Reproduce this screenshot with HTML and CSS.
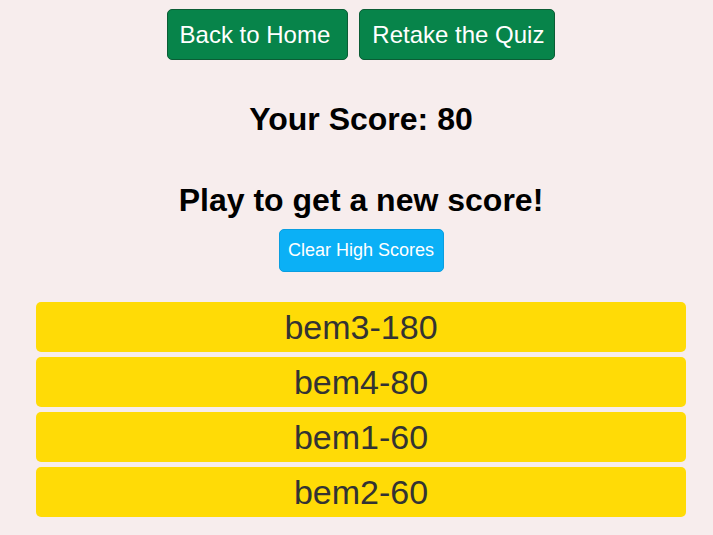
FILE: index.html
```html
<!DOCTYPE html>
<html>
<head>
<meta charset="utf-8">
<link rel="stylesheet" href="styles.css">
</head>
<body>
<div class="page">
  <div class="nav">
    <button class="btn-green btn-home">Back to Home</button>
    <button class="btn-green btn-retake">Retake the Quiz</button>
  </div>
  <h2 class="score">Your Score: 80</h2>
  <h2 class="play">Play to get a new score!</h2>
  <button class="btn-clear">Clear High Scores</button>
  <ul class="scores">
    <li>bem3-180</li>
    <li>bem4-80</li>
    <li>bem1-60</li>
    <li>bem2-60</li>
  </ul>
</div>
</body>
</html>
```

FILE: styles.css
```css
html, body {
  margin: 0;
  padding: 0;
  background: #f7eded;
  font-family: "Liberation Sans", Arial, sans-serif;
}
.page {
  width: 650px;
  margin-left: 36px;
  display: flex;
  flex-direction: column;
  align-items: center;
}
.nav {
  display: flex;
  gap: 11px;
  margin-top: 9px;
}
.btn-green {
  font-family: inherit;
  font-size: 24px;
  color: #fff;
  background: #07844a;
  border: 1px solid #0b5c35;
  border-radius: 5px;
  height: 51px;
}
.btn-home {
  padding: 0 17px 0 12px;
}
.btn-retake {
  padding: 0 10px 0 12px;
}
.score {
  margin: 0;
  margin-top: 41px;
  font-size: 32px;
  font-weight: bold;
  color: #000;
  line-height: 37px;
}
.play {
  margin: 0;
  margin-top: 44px;
  font-size: 32px;
  font-weight: bold;
  color: #000;
  line-height: 37px;
}
.btn-clear {
  margin-top: 10px;
  font-family: inherit;
  font-size: 18px;
  color: #fff;
  background: #0bb0f6;
  border: 1px solid #0a9ee0;
  border-radius: 5px;
  height: 43px;
  width: 165px;
  padding: 0;
}
.scores {
  list-style: none;
  margin: 30px 0 0 0;
  padding: 0;
  width: 650px;
  display: flex;
  flex-direction: column;
  gap: 5px;
}
.scores li {
  background: #ffdb06;
  border-radius: 5px;
  height: 50px;
  line-height: 50px;
  text-align: center;
  font-size: 34px;
  color: #333;
}
```
